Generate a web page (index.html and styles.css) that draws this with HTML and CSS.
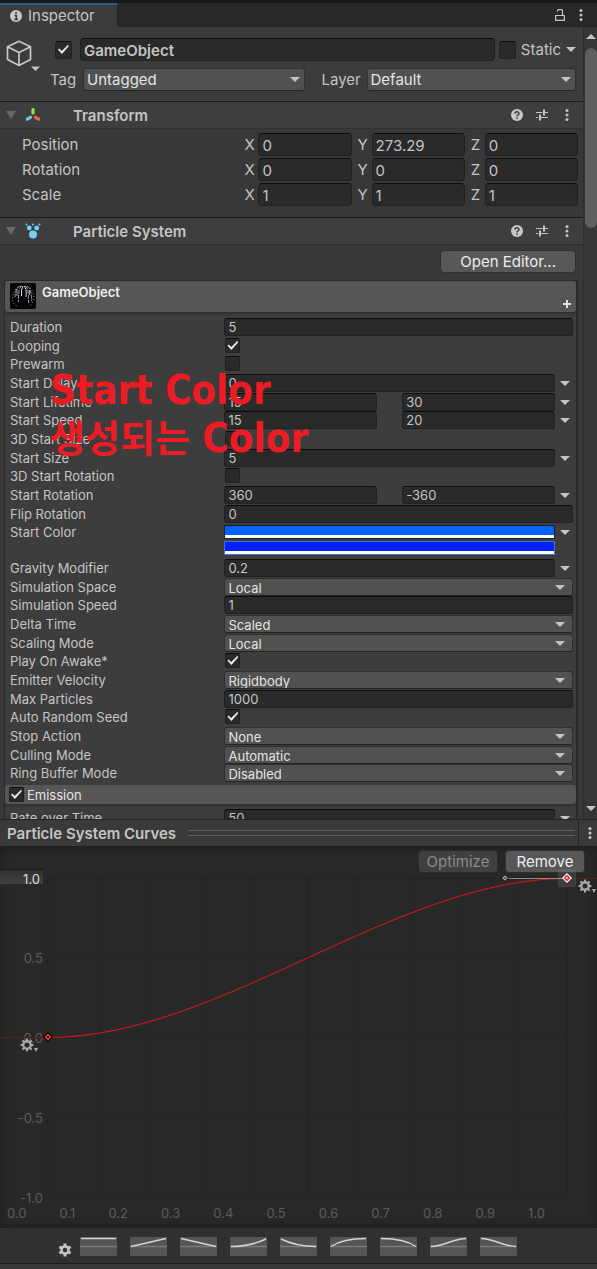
FILE: index.html
```html
<!DOCTYPE html>
<html lang="en">
<head>
<meta charset="utf-8">
<meta name="viewport" content="width=device-width, initial-scale=1">
<title>Inspector</title>
<link rel="stylesheet" href="styles.css">
</head>
<body>
<svg class="defs" aria-hidden="true">
  <symbol id="help" viewBox="0 0 12 12"><circle cx="6" cy="6" r="6" fill="#c8c8c8"/><path d="M4 4.700C4 2.200 8 2.200 8 4.600C8 6 6 5.900 6 7.400M6 8.500V10" fill="none" stroke="#3e3e3e" stroke-width="1.500"/></symbol>
  <symbol id="sliders" viewBox="0 0 12 12"><path d="M0 3.500H6.500M9 3.500H12M0 8.500H2M5 8.500H12" stroke="#c4c4c4" stroke-width="1.200"/><path d="M8 0.500V6.500M4 5.500V11.500" stroke="#c4c4c4" stroke-width="2"/></symbol>
  <symbol id="kebab" viewBox="0 0 4 12"><g fill="#c4c4c4"><circle cx="2" cy="1.500" r="1.500"/><circle cx="2" cy="6" r="1.500"/><circle cx="2" cy="10.500" r="1.500"/></g></symbol>
  <symbol id="gear" viewBox="0 0 14 14"><circle cx="7" cy="7" r="3.700" fill="none" stroke="currentColor" stroke-width="2.400"/><path d="M7 0.500V3M7 11V13.500M0.500 7H3M11 7H13.500M2.400 2.400L4 4M10 10L11.600 11.600M2.400 11.600L4 10M10 4L11.600 2.400" stroke="currentColor" stroke-width="2"/></symbol>
  <symbol id="gear6" viewBox="0 0 14 14"><circle cx="7" cy="7" r="3.500" fill="none" stroke="currentColor" stroke-width="2.600"/><path d="M7 0.500V3M7 11V13.500M1.400 3.700L3.500 5M10.500 9L12.600 10.300M1.400 10.300L3.500 9M10.500 5L12.600 3.700" stroke="currentColor" stroke-width="3"/></symbol>
</svg>

<nav class="tabbar">
  <button class="tab"><svg width="12" height="12" viewBox="0 0 12 12"><circle cx="6" cy="6" r="6" fill="#c8c8c8"/><path d="M6 2V4M4.500 5.500H6.300V9.300M4.300 9.500H8" fill="none" stroke="#3c3c3c" stroke-width="1.600"/></svg>Inspector</button>
  <span class="tab-tools">
    <button class="icon-btn" aria-label="Lock"><svg width="10" height="12" viewBox="0 0 10 12"><path d="M0.600 6.500H9.400V11.400H0.600ZM2.500 2.500V1.500Q2.500 0.600 3.500 0.600H6.500Q7.500 0.600 7.500 1.500V6.500" fill="none" stroke="#c4c4c4" stroke-width="1.200"/></svg></button>
    <button class="icon-btn" aria-label="Menu"><svg width="4" height="12"><use href="#kebab"/></svg></button>
  </span>
</nav>

<div class="inspector">
<main class="content">
  <header class="object-head">
    <button class="object-icon" aria-label="Select icon">
      <svg width="36" height="32" viewBox="0 0 36 32"><path d="M14 1.200L25.500 6.800V19.600L14 25.500L2.500 19.600V6.800ZM2.500 6.800L14 12.500L25.500 6.800M14 12.500V25.500" fill="none" stroke="#c8c8c8" stroke-width="1.700" stroke-linejoin="round"/><path d="M26 26.500H35L30.500 31Z" fill="#c4c4c4"/></svg>
    </button>
    <div class="object-rows">
      <div class="line">
        <input class="check check-lg" type="checkbox" checked aria-label="Active">
        <input class="field field-lg name" type="text" value="GameObject" aria-label="Name">
        <label class="static"><input class="check check-lg" type="checkbox">Static</label>
        <button class="drop" aria-label="Static options"></button>
      </div>
      <div class="line">
        <label class="tag" for="tag">Tag</label>
        <span class="select select-lg"><select id="tag"><option>Untagged</option></select></span>
        <label class="layer" for="layer">Layer</label>
        <span class="select select-lg"><select id="layer"><option>Default</option></select></span>
      </div>
    </div>
  </header>

  <section>
    <header class="comp-head">
      <button class="fold" aria-label="Toggle Transform"></button>
      <svg width="16" height="16" viewBox="0 0 16 16"><g stroke-width="3.200" stroke-linecap="round"><path d="M8 2.500V6" stroke="#9be04a"/><path d="M5.500 10.300L2.300 12.200" stroke="#6cc4f2"/><path d="M10.500 10.300L13.700 12.200" stroke="#f0653a"/></g></svg>
      <h2>Transform</h2>
      <button class="icon-btn" aria-label="Help"><svg width="12" height="12"><use href="#help"/></svg></button>
      <button class="icon-btn" aria-label="Presets"><svg width="12" height="12"><use href="#sliders"/></svg></button>
      <button class="icon-btn" aria-label="Menu"><svg width="4" height="12"><use href="#kebab"/></svg></button>
    </header>
    <div class="transform">
      <div class="vec"><span>Position</span><div class="axes">
        <label>X<input class="field field-lg" value="0"></label><label>Y<input class="field field-lg" value="273.29"></label><label>Z<input class="field field-lg" value="0"></label></div></div>
      <div class="vec"><span>Rotation</span><div class="axes">
        <label>X<input class="field field-lg" value="0"></label><label>Y<input class="field field-lg" value="0"></label><label>Z<input class="field field-lg" value="0"></label></div></div>
      <div class="vec"><span>Scale</span><div class="axes">
        <label>X<input class="field field-lg" value="1"></label><label>Y<input class="field field-lg" value="1"></label><label>Z<input class="field field-lg" value="1"></label></div></div>
    </div>
  </section>

  <section>
    <header class="comp-head">
      <button class="fold" aria-label="Toggle Particle System"></button>
      <svg width="16" height="16" viewBox="0 0 16 16"><g fill="#74ccf8"><circle cx="8" cy="11.500" r="4"/><circle cx="4.300" cy="5" r="2.400"/><circle cx="11.700" cy="5" r="2.400"/><circle cx="1.500" cy="1.500" r="1"/><circle cx="8" cy="1.500" r="1"/><circle cx="14.500" cy="1.500" r="1"/></g></svg>
      <h2>Particle System</h2>
      <button class="icon-btn" aria-label="Help"><svg width="12" height="12"><use href="#help"/></svg></button>
      <button class="icon-btn" aria-label="Presets"><svg width="12" height="12"><use href="#sliders"/></svg></button>
      <button class="icon-btn" aria-label="Menu"><svg width="4" height="12"><use href="#kebab"/></svg></button>
    </header>
    <div class="editor-line"><button class="btn open-editor">Open Editor...</button></div>

    <div class="modules">
      <header class="module-head main-module">
        <svg width="26" height="26" viewBox="0 0 26 26"><rect width="26" height="26" rx="2" fill="#060606"/><g fill="none" stroke="#9aa2a8" stroke-width="1"><path d="M12 3Q8 4 8.500 19M11 3Q5 4 5 15" stroke-dasharray="4 1"/><path d="M13 3Q11 6 11.500 13M14 3Q17 5 16 14" stroke="#d5dadd"/><path d="M15 3Q19 4 18.500 20M17 3Q22 6 21.500 18" stroke-dasharray="4 1"/><path d="M8 4Q2 9 2.500 17Q3 21 7 23M20 5Q25 10 23.500 17Q22 22 19 23" stroke-dasharray="1 2"/><path d="M7 6V13M19.500 7V12"/></g></svg>
        <h3>GameObject</h3>
        <button class="plus" aria-label="Add module"></button>
      </header>

      <div class="rows">
        <div class="row"><label for="f1">Duration</label><input class="field" id="f1" value="5"></div>
        <div class="row"><label for="f2">Looping</label><input class="check" type="checkbox" id="f2" checked></div>
        <div class="row"><label for="f3">Prewarm</label><input class="check" type="checkbox" id="f3"></div>
        <div class="row"><label for="f4">Start Delay</label><div class="with-drop"><input class="field" id="f4" value="0"><button class="drop" aria-label="Mode"></button></div></div>
        <div class="row"><label for="f5">Start Lifetime</label><div class="with-drop pair"><input class="field" id="f5" value="15"><input class="field" value="30" aria-label="Start Lifetime maximum"><button class="drop" aria-label="Mode"></button></div></div>
        <div class="row"><label for="f6">Start Speed</label><div class="with-drop pair"><input class="field" id="f6" value="15"><input class="field" value="20" aria-label="Start Speed maximum"><button class="drop" aria-label="Mode"></button></div></div>
        <div class="row"><label for="f7">3D Start Size</label><input class="check" type="checkbox" id="f7"></div>
        <div class="row"><label for="f8">Start Size</label><div class="with-drop"><input class="field" id="f8" value="5"><button class="drop" aria-label="Mode"></button></div></div>
        <div class="row"><label for="f9">3D Start Rotation</label><input class="check" type="checkbox" id="f9"></div>
        <div class="row"><label for="f10">Start Rotation</label><div class="with-drop pair"><input class="field" id="f10" value="360"><input class="field" value="-360" aria-label="Start Rotation maximum"><button class="drop" aria-label="Mode"></button></div></div>
        <div class="row"><label for="f11">Flip Rotation</label><input class="field" id="f11" value="0"></div>
      </div>
      <div class="row color-row">
        <span>Start Color</span>
        <div class="with-drop">
          <div class="swatches"><button class="swatch sky" aria-label="First color"></button><button class="swatch deep" aria-label="Second color"></button></div>
          <button class="drop" aria-label="Mode"></button>
        </div>
      </div>
      <div class="rows">
        <div class="row"><label for="g1">Gravity Modifier</label><div class="with-drop"><input class="field" id="g1" value="0.2"><button class="drop" aria-label="Mode"></button></div></div>
        <div class="row"><label for="g2">Simulation Space</label><span class="select"><select id="g2"><option>Local</option></select></span></div>
        <div class="row"><label for="g3">Simulation Speed</label><input class="field" id="g3" value="1"></div>
        <div class="row"><label for="g4">Delta Time</label><span class="select"><select id="g4"><option>Scaled</option></select></span></div>
        <div class="row"><label for="g5">Scaling Mode</label><span class="select"><select id="g5"><option>Local</option></select></span></div>
        <div class="row"><label for="g6">Play On Awake*</label><input class="check" type="checkbox" id="g6" checked></div>
        <div class="row"><label for="g7">Emitter Velocity</label><span class="select"><select id="g7"><option>Rigidbody</option></select></span></div>
        <div class="row"><label for="g8">Max Particles</label><input class="field" id="g8" value="1000"></div>
        <div class="row"><label for="g9">Auto Random Seed</label><input class="check" type="checkbox" id="g9" checked></div>
        <div class="row"><label for="g10">Stop Action</label><span class="select"><select id="g10"><option>None</option></select></span></div>
        <div class="row"><label for="g11">Culling Mode</label><span class="select"><select id="g11"><option>Automatic</option></select></span></div>
        <div class="row"><label for="g12">Ring Buffer Mode</label><span class="select"><select id="g12"><option>Disabled</option></select></span></div>
      </div>
      <header class="module-head emission"><label><input class="check" type="checkbox" checked>Emission</label></header>
      <div class="rows">
        <div class="row"><label for="h1">Rate over Time</label><div class="with-drop"><input class="field" id="h1" value="50"><button class="drop" aria-label="Mode"></button></div></div>
      </div>
    </div>
  </section>
</main>
<div class="scrollbar"><span class="arrow-up"></span><div class="track"><span class="thumb"></span></div><span class="arrow-down"></span></div>
<p class="note">Start Color<br><span lang="ko">생성되는</span> Color</p>
</div>

<section class="curves">
  <header class="curves-head">
    <h2>Particle System Curves</h2>
    <span class="grip"></span>
    <button class="icon-btn" aria-label="Menu"><svg width="4" height="12"><use href="#kebab"/></svg></button>
  </header>
  <div class="chart">
    <div class="chart-tools"><button class="btn" disabled>Optimize</button><button class="btn">Remove</button></div>
    <div class="y-axis"><input value="1.0" aria-label="Curve maximum"><span>0.5</span><span>0.0</span><span>-0.5</span><span>-1.0</span></div>
    <div class="plot">
      <svg class="lines" viewBox="0 0 100 320" preserveAspectRatio="none">
        <g class="minor"><path d="M10 0V320M20 0V320M30 0V320M40 0V320M60 0V320M70 0V320M80 0V320M90 0V320"/></g>
        <g class="major"><path d="M0 0H100M0 80H100M0 160H100M0 240H100M0 320H100M0 0V320M50 0V320M100 0V320"/></g>
        <path class="curve" d="M0 159.500C33.300 159.500 66.700 0.500 100 0.500"/>
        <path class="curve dim" d="M-10 159.500H0M100 0.500H110"/>
        <path class="handle" d="M88 0.500H100"/>
      </svg>
      <svg class="key key-start" width="12" height="12" viewBox="0 0 12 12"><path d="M6 1L11 6L6 11L1 6Z" fill="#100"/><path d="M6 3.500L8.500 6L6 8.500L3.500 6Z" fill="#301010" stroke="#f03c3c" stroke-width="1.300"/></svg>
      <svg class="key key-tangent" width="12" height="12" viewBox="0 0 12 12"><path d="M6 2L10 6L6 10L2 6Z" fill="#151515"/><path d="M6 4L8 6L6 8L4 6Z" fill="#222" stroke="#aaa" stroke-width="1.200"/></svg>
      <svg class="key key-end" width="18" height="18" viewBox="0 0 18 18"><rect width="18" height="18" fill="#888" opacity=".22"/><path d="M9 4L14 9L9 14L4 9Z" fill="#fff"/><path d="M9 6.500L11.500 9L9 11.500L6.500 9Z" fill="#fbb" stroke="#e02828" stroke-width="1.300"/></svg>
      <button class="wrap wrap-start" aria-label="Wrap mode before"><svg width="14" height="14"><use href="#gear"/></svg></button>
      <button class="wrap wrap-end" aria-label="Wrap mode after"><svg width="14" height="14"><use href="#gear"/></svg></button>
    </div>
    <div class="x-axis"><span>0.0</span><span>0.1</span><span>0.2</span><span>0.3</span><span>0.4</span><span>0.5</span><span>0.6</span><span>0.7</span><span>0.8</span><span>0.9</span><span>1.0</span></div>
  </div>
  <footer class="presets">
    <button class="preset-menu" aria-label="Preset options"><svg width="14" height="14"><use href="#gear6"/></svg></button>
    <button class="preset" aria-label="Constant"><svg viewBox="0 0 37 19"><path class="base" d="M0 9.500H37"/><path d="M1 1.500H36"/></svg></button>
    <button class="preset" aria-label="Linear up"><svg viewBox="0 0 37 19"><path class="base" d="M0 9.500H37"/><path d="M1 9.500L36 1.500"/></svg></button>
    <button class="preset" aria-label="Linear down"><svg viewBox="0 0 37 19"><path class="base" d="M0 9.500H37"/><path d="M1 1.500L36 9.500"/></svg></button>
    <button class="preset" aria-label="Ease in up"><svg viewBox="0 0 37 19"><path class="base" d="M0 9.500H37"/><path d="M1 9.500Q20 9.500 36 2"/></svg></button>
    <button class="preset" aria-label="Ease out down"><svg viewBox="0 0 37 19"><path class="base" d="M0 9.500H37"/><path d="M1 2Q16 9.500 36 9.500"/></svg></button>
    <button class="preset" aria-label="Ease out up"><svg viewBox="0 0 37 19"><path class="base" d="M0 9.500H37"/><path d="M1 9.500Q13 1.500 36 1.500"/></svg></button>
    <button class="preset" aria-label="Ease in down"><svg viewBox="0 0 37 19"><path class="base" d="M0 9.500H37"/><path d="M1 1.500Q24 1.500 36 9.500"/></svg></button>
    <button class="preset" aria-label="Ease up"><svg viewBox="0 0 37 19"><path class="base" d="M0 9.500H37"/><path d="M1 9.500C13 9.500 24 1.500 36 1.500"/></svg></button>
    <button class="preset" aria-label="Ease down"><svg viewBox="0 0 37 19"><path class="base" d="M0 9.500H37"/><path d="M1 1.500C13 1.500 24 9.500 36 9.500"/></svg></button>
  </footer>
</section>
</body>
</html>
```
FILE: styles.css
```css
* { box-sizing: border-box; }
body {
  margin: 0;
  height: 100vh;
  display: flex;
  flex-direction: column;
  background: #383838;
  color: #c4c4c4;
  font: 15px/20px Inter, "Liberation Sans", sans-serif;
}
h2, h3, p { margin: 0; }
button, input, select { font: inherit; color: inherit; margin: 0; }
button { border: 0; padding: 0; background: none; }
svg { display: block; flex: none; }
.defs { position: absolute; width: 0; height: 0; }

/* tab bar */
.tabbar {
  flex: none;
  display: flex;
  justify-content: space-between;
  height: 27px;
  border-top: 3px solid #191919;
  border-bottom: 1px solid #232323;
  background: #282828;
}
.tab {
  display: flex;
  align-items: center;
  gap: 6px;
  height: 24px;
  padding: 0 22px 0 10px;
  border-top: 2px solid #2c5d87;
  border-right: 1px solid #232323;
  background: #3c3c3c;
}
.tab-tools { display: flex; align-items: center; gap: 14px; padding-right: 14px; }

/* inspector */
.inspector { position: relative; flex: 1; min-height: 0; display: flex; overflow: hidden; }
.content { flex: 1; min-width: 0; }
.scrollbar {
  width: 14px;
  display: flex;
  flex-direction: column;
  align-items: center;
  gap: 9px;
  padding: 7px 0 8px 1px;
  border-left: 1px solid #2e2e2e;
  background: #353535;
}
.arrow-up, .arrow-down { border: 5px solid transparent; border-top-width: 0; border-bottom: 5px solid #c4c4c4; }
.arrow-down { border-top: 5px solid #c4c4c4; border-bottom-width: 0; }
.track { flex: 1; width: 12px; }
.thumb { display: block; height: 24%; border-radius: 6px; background: #5f5f5f; }

.object-head { display: flex; height: 74px; padding: 11px 7px 0 5px; background: #3c3c3c; }
.object-icon { width: 45px; display: flex; align-items: flex-start; padding-top: 2px; }
.object-rows { flex: 1; display: grid; grid-auto-rows: 23px; gap: 7px; }
.line { display: flex; align-items: center; min-width: 0; }
.line > .check { margin: 0 8px 0 5px; }
.name { flex: 1; font-weight: 600; }
.static { display: flex; align-items: center; gap: 5px; margin: 0 5px 0 4px; }
.tag { width: 33px; }
.layer { width: 62px; padding-left: 17px; }
.line .select { flex: 221 1 0; }
.line .layer + .select { flex-grow: 209; }

.field {
  min-width: 0;
  width: 100%;
  height: 18px;
  padding: 0 3px;
  border: 1px solid #212121;
  border-top-color: #0d0d0d;
  border-radius: 3px;
  background: #2a2a2a;
  outline: 0;
}
.field-lg { height: 23px; padding: 1px 3px 0; border-radius: 4px; }

.check {
  appearance: none;
  flex: none;
  display: grid;
  place-items: center;
  width: 15px;
  height: 15px;
  border: 1px solid #212121;
  border-top-color: #0d0d0d;
  border-radius: 2px;
  background: #2a2a2a;
}
.check-lg { width: 17px; height: 18px; border-radius: 3px; }
.check:checked::before {
  content: "";
  width: 11px;
  height: 9px;
  background: #e8e8e8;
  clip-path: polygon(0 52%, 11% 40%, 34% 68%, 89% 0, 100% 10%, 36% 100%);
}

.select { position: relative; display: block; min-width: 0; height: 18px; }
.select select {
  appearance: none;
  width: 100%;
  height: 100%;
  padding: 0 20px 0 3px;
  border: 1px solid #303030;
  border-bottom-color: #242424;
  border-radius: 3px;
  background: #515151;
  color: #e4e4e4;
  outline: 0;
}
.select::after { content: ""; position: absolute; right: 8px; top: 7px; border: 5px solid transparent; border-top-color: #c4c4c4; border-bottom-width: 0; pointer-events: none; }
.select-lg { height: 23px; }
.select-lg::after { right: 5px; top: 9px; }

.drop { width: 10px; height: 18px; display: flex; align-items: center; }
.drop::before { content: ""; border: 5px solid transparent; border-top-color: #c4c4c4; border-bottom-width: 0; }

.comp-head {
  display: flex;
  align-items: center;
  height: 28px;
  padding: 0 14px 0 6px;
  border-top: 1px solid #1a1a1a;
  border-bottom: 1px solid #303030;
  background: #3e3e3e;
}
.comp-head h2, .curves-head h2 { padding-top: 1px; font-size: 15px; font-weight: 600; }
.comp-head h2 { flex: 1; padding-left: 32px; }
.comp-head .icon-btn { margin-left: 13px; }
.comp-head .icon-btn:last-child { margin-left: 17px; }
.fold { margin-right: 9px; border: 5px solid transparent; border-top: 8px solid #686868; border-bottom-width: 0; }

.transform { display: grid; gap: 2px; padding: 4px 5px 11px 22px; }
.vec { display: grid; grid-template-columns: 2fr 3fr; align-items: center; }
.axes { display: grid; grid-template-columns: repeat(3, minmax(0, 1fr)); gap: 6px; }
.axes label { display: grid; grid-template-columns: 14px minmax(0, 1fr); align-items: center; }

.editor-line { display: flex; justify-content: flex-end; padding: 5px 7px 7px; }
.btn { height: 23px; padding: 0 7px; border: 1px solid #303030; border-radius: 4px; background: #585858; color: #eee; }
.open-editor { padding: 0 19px; }

/* particle modules */
.modules {
  margin: 0 5px 0 4px;
  border: 1px solid #2a2a2a;
  border-right-width: 2px;
  background: #3d3d3d;
  font-size: 13px;
  line-height: 18px;
}
.module-head { display: flex; border-radius: 3px; background: #565656; box-shadow: 0 2px 2px #303030; color: #e4e4e4; }
.main-module { gap: 6px; height: 31px; padding: 2px 5px; margin-bottom: 6px; }
.main-module h3 { flex: 1; font-size: 13px; font-weight: 600; line-height: 18px; color: #f0f0f0; }
.plus {
  align-self: flex-end;
  width: 8px;
  height: 8px;
  margin-bottom: 2px;
  background: linear-gradient(#e0e0e0, #e0e0e0) center / 8px 2px no-repeat, linear-gradient(#e0e0e0, #e0e0e0) center / 2px 8px no-repeat;
}
.rows { display: grid; grid-auto-rows: 19px 18px 19px; }
.row { display: grid; grid-template-columns: 8fr 13fr; align-items: start; padding: 0 3px 0 5px; }
.row > .check { margin: 1px; }
.with-drop { display: grid; grid-template-columns: minmax(0, 1fr) 10px; gap: 5px; padding-right: 3px; }
.pair { grid-template-columns: minmax(0, 1fr) minmax(0, 1fr) 10px; }
.pair .field + .field { margin-left: 10px; width: auto; }
.pair .field:first-child { margin-right: 10px; width: auto; }
.color-row { height: 36px; }
.swatches { display: grid; gap: 2px; padding-top: 2px; }
.swatch { height: 14px; border: 1px solid #202020; background: linear-gradient(#0062ff 75%, #fff 75%); }
.deep { border-color: #3a79bb; background: linear-gradient(#0620ff 75%, #fff 75%); }
.emission { height: 19px; margin: 2px 0 5px; padding-left: 4px; }
.emission label { display: flex; align-items: center; gap: 3px; }

/* annotation drawn over the inspector */
.note {
  position: absolute;
  left: 50px;
  top: 339px;
  color: #ed1c24;
  font: bold 40px/48px "DejaVu Sans Condensed", "Noto Sans", "Noto Sans CJK KR", sans-serif;
  white-space: nowrap;
  pointer-events: none;
}
.note span { font-family: "Noto Sans CJK KR", sans-serif; font-size: 38px; line-height: 40px; }

/* curve editor */
.curves { flex: none; }
.curves-head { display: flex; align-items: center; height: 28px; padding: 0 5px 0 7px; border-top: 1px solid #232323; border-bottom: 1px solid #202020; background: #3a3a3a; }
.grip { flex: 1; height: 6px; margin: 0 3px 0 12px; border: 1px solid #5f5f5f; border-width: 1px 0; }
.curves-head .icon-btn { padding: 7px 0 7px 9px; border-left: 1px solid #232323; }
.chart {
  display: grid;
  grid-template: 31px 320px 30px / 48px minmax(0, 1fr) 30px;
  background: #282828;
  box-shadow: inset 0 0 8px #1c1c1c;
  overflow: hidden;
}
.chart-tools { grid-column: 1 / -1; display: flex; justify-content: flex-end; align-items: flex-start; gap: 7px; padding: 3px 12px 0; }
.chart-tools .btn { min-width: 80px; }
.btn:disabled { border-color: #2c2c2c; background: #404040; color: #8a8a8a; }
.y-axis { display: flex; flex-direction: column; justify-content: space-between; margin: -9px 0; padding-right: 5px; font-size: 13px; line-height: 18px; text-align: right; color: #5c5c5c; }
.y-axis input { width: 43px; height: 18px; padding: 0 3px 0 0; border: 0; border-top: 1px solid #1c1c1c; background: linear-gradient(#303030, #404040 80%, #282828 80%); color: #d8d8d8; text-align: right; }
.plot { position: relative; }
.lines { width: 100%; height: 320px; overflow: visible; }
.lines path { fill: none; stroke-width: 1px; vector-effect: non-scaling-stroke; }
.minor path { stroke: #262626; }
.major path { stroke: #222; }
.lines .curve { stroke: #e21616; }
.lines .dim { stroke: #5c1c1c; }
.lines .handle { stroke: #8c8c8c; }
.key { position: absolute; }
.key-start { left: -6px; top: 153px; }
.key-tangent { left: calc(88% - 6px); top: -6px; }
.key-end { left: calc(100% - 9px); top: -9px; }
.wrap { position: absolute; display: flex; align-items: flex-end; color: #a8a8a8; }
.wrap::after { content: ""; border: 2px solid transparent; border-top: 4px solid #a8a8a8; border-bottom-width: 0; }
.wrap-start { left: -28px; top: 160px; }
.wrap-end { left: calc(100% + 11px); top: 1px; }
.x-axis { grid-column: 1 / -1; display: flex; justify-content: space-between; align-items: center; padding: 0 52px 0 7px; font-size: 13px; color: #5c5c5c; }
.presets { display: flex; gap: 13px; height: 41px; padding: 9px 0 0 58px; border-bottom: 5px solid #383838; background: #303030; box-shadow: inset 0 -1px #1c1c1c; }
.preset-menu { margin: 6px -5px 0 0; height: 14px; color: #c4c4c4; }
.preset { width: 37px; height: 19px; background: #555; }
.preset path { fill: none; stroke: #d4d4d4; stroke-width: 1.5px; }
.preset .base { stroke: #7a7a7a; }
```
